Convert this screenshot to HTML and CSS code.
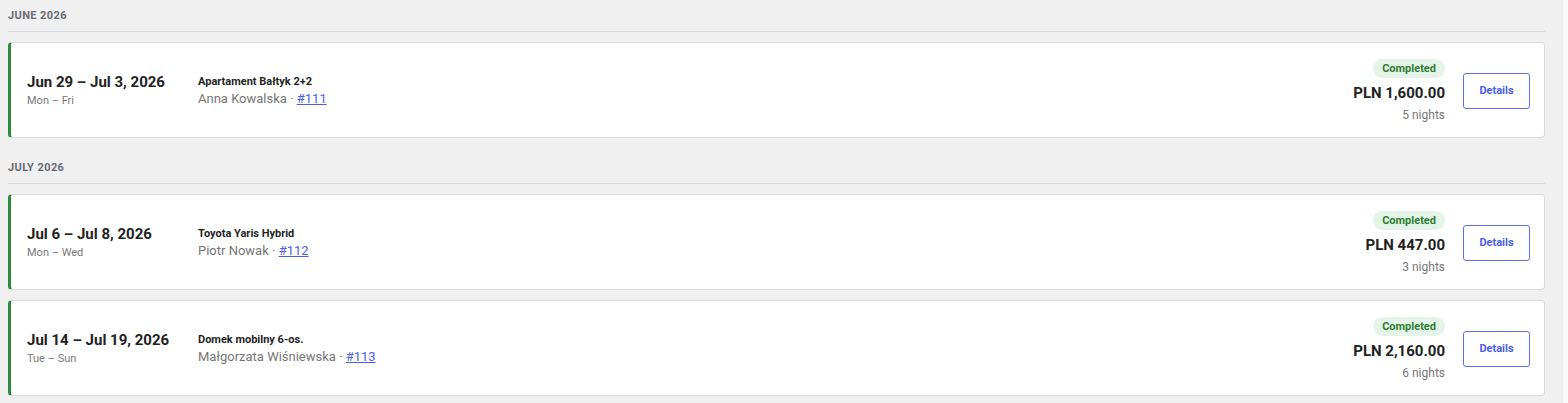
FILE: index.html
```html
<!DOCTYPE html>
<html lang="en">
<head>
<meta charset="utf-8">
<title>Bookings</title>
<link rel="stylesheet" href="styles.css">
</head>
<body>
<div class="page">
  <main class="list">
    <section class="month">
      <h2 class="month-title">June 2026</h2>
      <article class="booking">
        <div class="when">
          <div class="range">Jun 29 – Jul 3, 2026</div>
          <div class="days">Mon – Fri</div>
        </div>
        <div class="what">
          <div class="item">Apartament Bałtyk 2+2</div>
          <div class="guest">Anna Kowalska · <a href="#" class="ref">#111</a></div>
        </div>
        <div class="amount">
          <span class="badge">Completed</span>
          <div class="price">PLN 1,600.00</div>
          <div class="nights">5 nights</div>
        </div>
        <button class="details">Details</button>
      </article>
    </section>
    <section class="month">
      <h2 class="month-title">July 2026</h2>
      <article class="booking">
        <div class="when">
          <div class="range">Jul 6 – Jul 8, 2026</div>
          <div class="days">Mon – Wed</div>
        </div>
        <div class="what">
          <div class="item">Toyota Yaris Hybrid</div>
          <div class="guest">Piotr Nowak · <a href="#" class="ref">#112</a></div>
        </div>
        <div class="amount">
          <span class="badge">Completed</span>
          <div class="price">PLN 447.00</div>
          <div class="nights">3 nights</div>
        </div>
        <button class="details">Details</button>
      </article>
      <article class="booking">
        <div class="when">
          <div class="range">Jul 14 – Jul 19, 2026</div>
          <div class="days">Tue – Sun</div>
        </div>
        <div class="what">
          <div class="item">Domek mobilny 6-os.</div>
          <div class="guest">Małgorzata Wiśniewska · <a href="#" class="ref">#113</a></div>
        </div>
        <div class="amount">
          <span class="badge">Completed</span>
          <div class="price">PLN 2,160.00</div>
          <div class="nights">6 nights</div>
        </div>
        <button class="details">Details</button>
      </article>
    </section>
  </main>
  <div class="edge"></div>
</div>
</body>
</html>
```

FILE: styles.css
```css
* { box-sizing: border-box; }
html, body { margin: 0; padding: 0; }
body {
  font-family: Roboto, "Liberation Sans", Arial, sans-serif;
  background: #f0f0f0;
  color: #222;
}
.page {
  display: flex;
  min-height: 403px;
}
.list {
  flex: 1;
  padding: 8px 18px 0 8px;
  display: flex;
  flex-direction: column;
  gap: 22px;
}
.edge {
  width: 5px;
  background: #fafafa;
}
.month {
  display: flex;
  flex-direction: column;
  gap: 10px;
}
.month-title {
  margin: 0;
  font-size: 11px;
  line-height: 16px;
  font-weight: 700;
  letter-spacing: 0.4px;
  text-transform: uppercase;
  color: #676b70;
  padding-bottom: 7px;
  border-bottom: 1px solid #d8dadd;
}
.booking {
  display: flex;
  align-items: center;
  background: #fff;
  border: 1px solid #dcdcdc;
  border-left: 3px solid #2b8a3e;
  border-radius: 4px;
  padding: 16px 14px 14px 16px;
}
.when {
  width: 171px;
  flex-shrink: 0;
  margin-top: -2px;
}
.range {
  font-size: 15px;
  line-height: 19px;
  font-weight: 700;
  color: #222;
}
.days {
  font-size: 11px;
  line-height: 15px;
  color: #7a7a7a;
  margin-top: 1px;
}
.what {
  flex: 1;
  margin-top: -2px;
}
.item {
  font-size: 11px;
  line-height: 15px;
  font-weight: 700;
  color: #1f1f1f;
}
.guest {
  font-size: 13px;
  line-height: 17px;
  color: #767676;
  margin-top: 1px;
}
.ref {
  color: #4a5ee8;
  text-decoration: underline;
}
.amount {
  display: flex;
  flex-direction: column;
  align-items: flex-end;
  text-align: right;
}
.badge {
  display: inline-block;
  font-size: 11px;
  line-height: 15px;
  font-weight: 700;
  color: #2e7d32;
  background: #e4f4e8;
  border-radius: 10px;
  padding: 2px 9px;
  margin-bottom: 5px;
}
.price {
  font-size: 15px;
  line-height: 20px;
  font-weight: 700;
  color: #222;
}
.nights {
  font-size: 12px;
  line-height: 16px;
  color: #777;
  margin-top: 4px;
}
.details {
  margin-left: 18px;
  margin-top: -1px;
  width: 67px;
  height: 36px;
  background: #fff;
  border: 1px solid #5c6ff0;
  border-radius: 3px;
  color: #4a5ee8;
  font-family: inherit;
  font-size: 11px;
  font-weight: 700;
  cursor: pointer;
  padding: 0;
}
```
